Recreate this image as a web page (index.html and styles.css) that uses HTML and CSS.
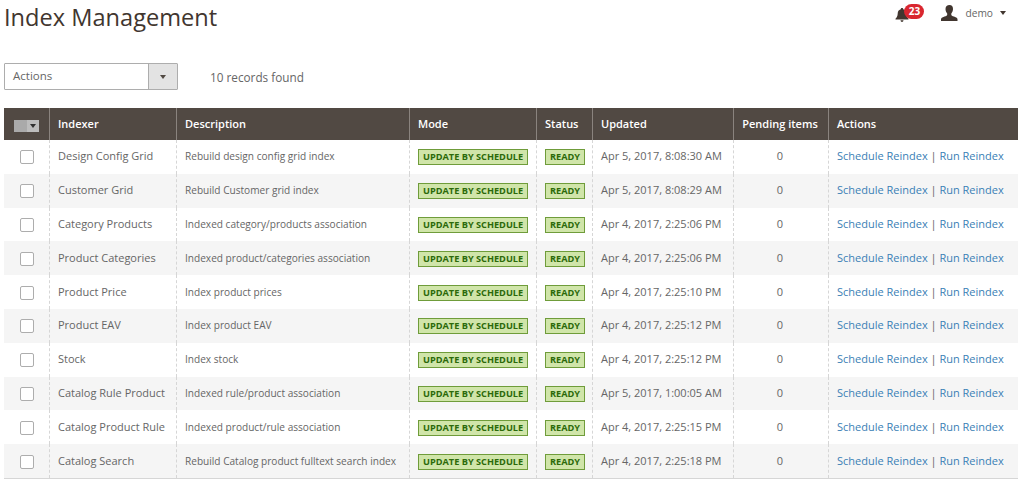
FILE: index.html
```html
<!DOCTYPE html>
<html lang="en">
<head>
<meta charset="utf-8">
<title>Index Management</title>
<link rel="stylesheet" href="styles.css">
</head>
<body>
<header class="top">
  <h1 class="title">Index Management</h1>
  <div class="tools">
    <div class="bell">
      <svg class="bell-icon" width="14" height="16" viewBox="0 0 14 16"><path fill="#41362f" d="M7 1c.8 0 1.2.5 1.3 1.2C10.400 2.800 11.200 4.500 11.300 6.500c.1 2.400.8 3.800 2.200 5.200v.8H.5v-.8C1.900 10.300 2.600 8.900 2.700 6.500 2.800 4.500 3.600 2.800 5.700 2.200 5.800 1.500 6.200 1 7 1zM5.500 13.300h3C8.400 14.500 7.800 15 7 15s-1.400-.5-1.500-1.700z"/></svg>
      <span class="badge">23</span>
    </div>
    <div class="user">
      <svg class="user-icon" width="17" height="16" viewBox="0 0 17 16"><path fill="#41362f" d="M8.500 0c2.300 0 3.500 1.700 3.500 3.900 0 1.700-.7 3.500-1.700 4.500v1.300c0 .8 1 1.200 2.700 1.900 2.500 1 3.500 1.700 3.500 2.700V16H0v-1.700c0-1 1-1.700 3.500-2.700 1.700-.7 2.700-1.100 2.700-1.900V8.400C5.200 7.400 4.500 5.600 4.500 3.900 4.500 1.700 6.200 0 8.500 0z"/></svg>
      <span class="user-name">demo</span>
      <span class="caret caret-user"></span>
    </div>
  </div>
</header>

<div class="toolbar">
  <div class="select">
    <span class="select-label">Actions</span>
    <span class="select-btn"><span class="caret"></span></span>
  </div>
  <span class="records">10 records found</span>
</div>

<table class="grid">
  <colgroup>
    <col class="c1"><col class="c2"><col class="c3"><col class="c4"><col class="c5"><col class="c6"><col class="c7"><col class="c8">
  </colgroup>
  <thead>
    <tr>
      <th class="th-check"><span class="mass"><span class="mass-box"></span><span class="mass-btn"><span class="caret caret-dark"></span></span></span></th>
      <th>Indexer</th><th>Description</th><th>Mode</th><th>Status</th><th>Updated</th><th class="center">Pending items</th><th>Actions</th>
    </tr>
  </thead>
  <tbody>
    <tr><td class="check"><span class="box"></span></td><td>Design Config Grid</td><td class="desc">Rebuild design config grid index</td><td class="tag-cell"><span class="tag">UPDATE BY SCHEDULE</span></td><td class="tag-cell"><span class="tag">READY</span></td><td>Apr 5, 2017, 8:08:30 AM</td><td class="center">0</td><td><a href="#">Schedule Reindex</a> <span class="sep">|</span> <a href="#">Run Reindex</a></td></tr>
    <tr><td class="check"><span class="box"></span></td><td>Customer Grid</td><td class="desc">Rebuild Customer grid index</td><td class="tag-cell"><span class="tag">UPDATE BY SCHEDULE</span></td><td class="tag-cell"><span class="tag">READY</span></td><td>Apr 5, 2017, 8:08:29 AM</td><td class="center">0</td><td><a href="#">Schedule Reindex</a> <span class="sep">|</span> <a href="#">Run Reindex</a></td></tr>
    <tr><td class="check"><span class="box"></span></td><td>Category Products</td><td class="desc">Indexed category/products association</td><td class="tag-cell"><span class="tag">UPDATE BY SCHEDULE</span></td><td class="tag-cell"><span class="tag">READY</span></td><td>Apr 4, 2017, 2:25:06 PM</td><td class="center">0</td><td><a href="#">Schedule Reindex</a> <span class="sep">|</span> <a href="#">Run Reindex</a></td></tr>
    <tr><td class="check"><span class="box"></span></td><td>Product Categories</td><td class="desc">Indexed product/categories association</td><td class="tag-cell"><span class="tag">UPDATE BY SCHEDULE</span></td><td class="tag-cell"><span class="tag">READY</span></td><td>Apr 4, 2017, 2:25:06 PM</td><td class="center">0</td><td><a href="#">Schedule Reindex</a> <span class="sep">|</span> <a href="#">Run Reindex</a></td></tr>
    <tr><td class="check"><span class="box"></span></td><td>Product Price</td><td class="desc">Index product prices</td><td class="tag-cell"><span class="tag">UPDATE BY SCHEDULE</span></td><td class="tag-cell"><span class="tag">READY</span></td><td>Apr 4, 2017, 2:25:10 PM</td><td class="center">0</td><td><a href="#">Schedule Reindex</a> <span class="sep">|</span> <a href="#">Run Reindex</a></td></tr>
    <tr><td class="check"><span class="box"></span></td><td>Product EAV</td><td class="desc">Index product EAV</td><td class="tag-cell"><span class="tag">UPDATE BY SCHEDULE</span></td><td class="tag-cell"><span class="tag">READY</span></td><td>Apr 4, 2017, 2:25:12 PM</td><td class="center">0</td><td><a href="#">Schedule Reindex</a> <span class="sep">|</span> <a href="#">Run Reindex</a></td></tr>
    <tr><td class="check"><span class="box"></span></td><td>Stock</td><td class="desc">Index stock</td><td class="tag-cell"><span class="tag">UPDATE BY SCHEDULE</span></td><td class="tag-cell"><span class="tag">READY</span></td><td>Apr 4, 2017, 2:25:12 PM</td><td class="center">0</td><td><a href="#">Schedule Reindex</a> <span class="sep">|</span> <a href="#">Run Reindex</a></td></tr>
    <tr><td class="check"><span class="box"></span></td><td>Catalog Rule Product</td><td class="desc">Indexed rule/product association</td><td class="tag-cell"><span class="tag">UPDATE BY SCHEDULE</span></td><td class="tag-cell"><span class="tag">READY</span></td><td>Apr 5, 2017, 1:00:05 AM</td><td class="center">0</td><td><a href="#">Schedule Reindex</a> <span class="sep">|</span> <a href="#">Run Reindex</a></td></tr>
    <tr><td class="check"><span class="box"></span></td><td>Catalog Product Rule</td><td class="desc">Indexed product/rule association</td><td class="tag-cell"><span class="tag">UPDATE BY SCHEDULE</span></td><td class="tag-cell"><span class="tag">READY</span></td><td>Apr 4, 2017, 2:25:15 PM</td><td class="center">0</td><td><a href="#">Schedule Reindex</a> <span class="sep">|</span> <a href="#">Run Reindex</a></td></tr>
    <tr><td class="check"><span class="box"></span></td><td>Catalog Search</td><td class="desc">Rebuild Catalog product fulltext search index</td><td class="tag-cell"><span class="tag">UPDATE BY SCHEDULE</span></td><td class="tag-cell"><span class="tag">READY</span></td><td>Apr 4, 2017, 2:25:18 PM</td><td class="center">0</td><td><a href="#">Schedule Reindex</a> <span class="sep">|</span> <a href="#">Run Reindex</a></td></tr>
  </tbody>
</table>
</body>
</html>
```

FILE: styles.css
```css
html, body { margin: 0; padding: 0; background: #fff; }
body {
  width: 1024px;
  height: 487px;
  overflow: hidden;
  font-family: "Open Sans", sans-serif;
  color: #666;
  font-size: 11px;
  padding-left: 4px;
  box-sizing: border-box;
}
.top {
  display: flex;
  justify-content: space-between;
  align-items: flex-start;
  height: 63px;
}
.title {
  margin: 0;
  font-weight: 400;
  font-size: 23.600px;
  line-height: 35px;
  color: #41362f;
}
.tools {
  display: flex;
  align-items: center;
  padding-top: 4px;
  padding-right: 18px;
  height: 18px;
}
.bell { display: flex; align-items: flex-start; width: 46px; }
.bell-icon { margin-top: 3px; margin-right: -5px; }
.badge {
  background: #d9262f;
  color: #fff;
  font-size: 10px;
  font-weight: 700;
  line-height: 15px;
  height: 15px;
  width: 20px;
  text-align: center;
  border-radius: 8px;
}
.user { display: flex; align-items: center; }
.user-icon { margin-right: 7px; }
.user-name { font-size: 10.200px; margin-right: 7px; }
.caret {
  display: inline-block;
  width: 0;
  height: 0;
  border-left: 3px solid transparent;
  border-right: 3px solid transparent;
  border-top: 4px solid #514943;
}
.caret-user { border-top-color: #41362f; }
.toolbar {
  display: flex;
  align-items: center;
  height: 27px;
  margin-bottom: 18px;
}
.select {
  display: flex;
  width: 174px;
  height: 27px;
  box-sizing: border-box;
  border: 1px solid #adadad;
  background: #fff;
  border-radius: 1px;
}
.select-label {
  flex: 1;
  font-size: 11.500px;
  line-height: 24px;
  padding-left: 8px;
}
.select-btn {
  width: 28px;
  background: #e3e3e3;
  border-left: 1px solid #adadad;
  display: flex;
  align-items: center;
  justify-content: center;
}
.records { margin-left: 32px; font-size: 11.750px; }
.grid {
  border-collapse: separate;
  border-spacing: 0;
  table-layout: fixed;
  width: 1014px;
  border-bottom: 1px solid #d6d6d6;
}
.c1 { width: 46px; } .c2 { width: 127px; } .c3 { width: 233px; } .c4 { width: 127px; }
.c5 { width: 56px; } .c6 { width: 141px; } .c7 { width: 95px; } .c8 { width: 189px; }
th {
  background: #514943;
  color: #fff;
  height: 32px;
  padding: 0 8px 2px;
  font-size: 11px;
  font-weight: 600;
  text-align: left;
  border-right: 1px solid #8a837e;
  box-sizing: border-box;
  white-space: nowrap;
}
th:last-child { border-right: 0; }
td {
  height: 33.800px;
  padding: 0 8px 2px;
  box-sizing: border-box;
  border-right: 1px dashed #d6d6d6;
  white-space: nowrap;
}
td:last-child { border-right: 0; }
tbody tr:nth-child(even) td { background: #f5f5f5; }
td.desc { font-size: 10.100px; padding-bottom: 1px; }
th.center { text-align: center; padding-left: 0; padding-right: 2px; }
td.center { text-align: center; padding-left: 0; padding-right: 2px; }
.th-check { padding: 0; text-align: center; }
td.check { padding: 0 0 1px; text-align: center; }
td.tag-cell { padding-bottom: 0; }
.mass { display: inline-flex; vertical-align: middle; }
.mass-box { width: 13px; height: 12px; background: #aaa; }
.mass-btn {
  width: 12px;
  height: 12px;
  background: #bdbdbd;
  display: flex;
  align-items: center;
  justify-content: center;
}
.caret-dark { border-top-color: #303030; }
.box {
  display: inline-block;
  width: 14px;
  height: 14px;
  box-sizing: border-box;
  border: 1px solid #adadad;
  border-radius: 2px;
  background: #fff;
  vertical-align: middle;
}
.tag {
  display: inline-block;
  background: #d0e5a9;
  border: 1px solid #6f9c3a;
  color: #2c6a0a;
  font-size: 9.200px;
  font-weight: 700;
  line-height: 14px;
  padding: 0 4px;
  vertical-align: middle;
}
a { text-decoration: none; color: #3a80b5; }
.sep { color: #666; }
```
